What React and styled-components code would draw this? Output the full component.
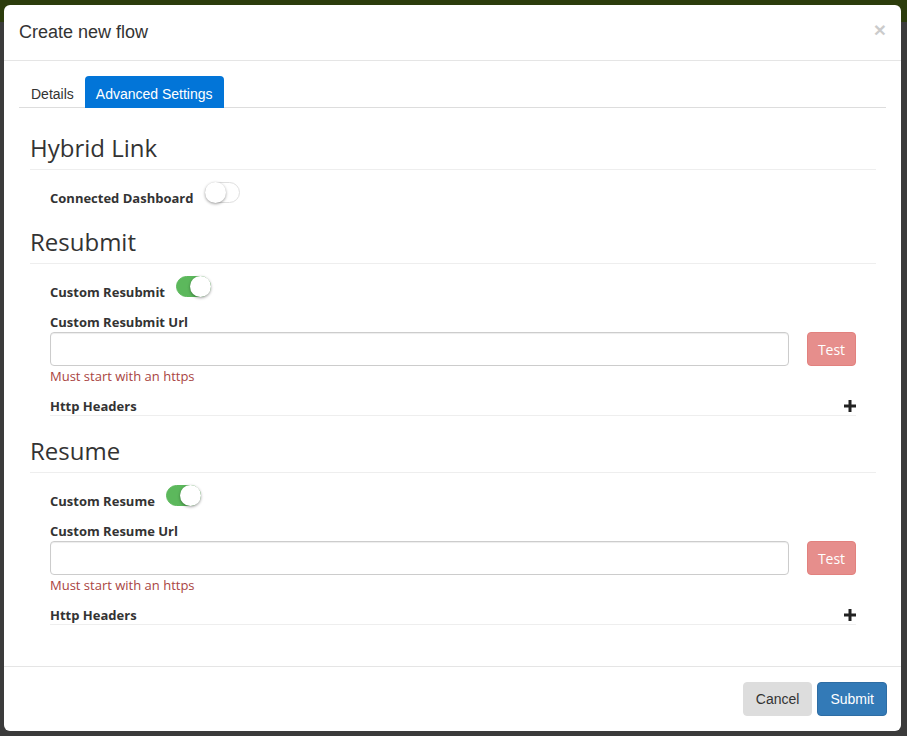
import React, { useState } from "react";
import styled, { createGlobalStyle } from "styled-components";

const Global = createGlobalStyle`
  html, body { margin: 0; padding: 0; }
  body {
    background: linear-gradient(#2c3c0c 0, #2c3c0c 22px, #3b3b3b 22px, #3b3b3b 100%);
    min-height: 736px;
    font-family: "Open Sans", "Noto Sans", sans-serif;
    color: #333;
  }
  * { box-sizing: border-box; }
`;

const Page = styled.div`
  padding: 5px 6px 5px 4px;
`;

const Modal = styled.div`
  width: 897px;
  background: #fff;
  border-radius: 6px;
  display: flex;
  flex-direction: column;
`;

const Header = styled.div`
  display: flex;
  align-items: center;
  justify-content: space-between;
  padding: 15px;
  border-bottom: 1px solid #e5e5e5;
`;

const Title = styled.h4`
  margin: 0;
  font-family: "Liberation Sans", Arial, sans-serif;
  font-size: 18px;
  font-weight: 400;
  line-height: 25px;
  color: #333;
`;

const Close = styled.button`
  border: 0;
  background: none;
  padding: 0;
  margin-top: -6px;
  font-family: "Liberation Sans", Arial, sans-serif;
  font-size: 21px;
  font-weight: 700;
  line-height: 1;
  color: #000;
  opacity: 0.2;
  cursor: pointer;
`;

const Body = styled.div`
  padding: 15px;
`;

const Tabs = styled.div`
  display: flex;
  border-bottom: 1px solid #ddd;
`;

const Tab = styled.button`
  border: 0;
  margin: 0 0 -1px;
  padding: 7px 11px 4px;
  height: 32px;
  font-family: "Liberation Sans", Arial, sans-serif;
  font-size: 14px;
  line-height: 20px;
  border-radius: 4px 4px 0 0;
  cursor: pointer;
  background: ${(p) => (p.$active ? "#0275d8" : "transparent")};
  color: ${(p) => (p.$active ? "#fff" : "#333")};
  &:first-child {
    padding-left: 12px;
  }
`;

const Panel = styled.div`
  padding: 0 10px 26px 11px;
`;

const Section = styled.section`
  margin-top: ${(p) => (p.$first ? "27px" : "22px")};
`;

const Heading = styled.h3`
  margin: 0 0 12px;
  padding: 0 0 8px;
  border-bottom: 1px solid #eee;
  font-size: 24px;
  font-weight: 400;
  line-height: 26px;
  color: #333;
`;

const Group = styled.div`
  padding: 0 20px;
`;

const ToggleRow = styled.div`
  display: flex;
  align-items: flex-start;
  gap: 11px;
`;

const Label = styled.label`
  display: block;
  font-size: 13px;
  font-weight: 700;
  line-height: 18px;
  color: #333;
  padding-top: ${(p) => (p.$inline ? "7px" : "0")};
  margin-top: ${(p) => (p.$spaced ? "12px" : "0")};
`;

const Switch = styled.button`
  position: relative;
  flex: none;
  width: 35px;
  height: 21px;
  margin-left: ${(p) => (p.$on ? "0" : "1px")};
  border-radius: 11px;
  padding: 0;
  cursor: pointer;
  border: 1px solid ${(p) => (p.$on ? "#5cb85c" : "#dfdfdf")};
  background: ${(p) => (p.$on ? "#5cb85c" : "#fff")};
  &::after {
    content: "";
    position: absolute;
    top: -1px;
    left: ${(p) => (p.$on ? "13px" : "-1px")};
    width: 21px;
    height: 21px;
    border-radius: 50%;
    background: #fff;
    box-shadow: 0 1px 3px rgba(0, 0, 0, 0.4);
  }
`;

const UrlRow = styled.div`
  display: flex;
  gap: 18px;
  margin-top: 1px;
`;

const Input = styled.input`
  flex: 1;
  height: 34px;
  border: 1px solid #ccc;
  border-radius: 4px;
  padding: 6px 12px;
  font-size: 14px;
  box-shadow: inset 0 1px 1px rgba(0, 0, 0, 0.075);
  outline: none;
`;

const TestButton = styled.button`
  width: 49px;
  height: 34px;
  border: 1px solid #d43f3a;
  border-radius: 4px;
  background: #d9534f;
  color: #fff;
  opacity: 0.65;
  font-family: "Open Sans", sans-serif;
  font-size: 14px;
  padding: 0;
  cursor: not-allowed;
`;

const Help = styled.div`
  margin-top: 1px;
  font-size: 13px;
  line-height: 18px;
  color: #a94442;
`;

const HeadersRow = styled.div`
  display: flex;
  justify-content: space-between;
  align-items: center;
  margin-top: 12px;
  border-bottom: 1px solid #eee;
`;

const PlusIcon = styled.svg`
  display: block;
  width: 12px;
  height: 12px;
  fill: #222;
`;

const Footer = styled.div`
  display: flex;
  justify-content: flex-end;
  gap: 5px;
  padding: 15px 14px 15px 15px;
  border-top: 1px solid #e5e5e5;
`;

const FooterButton = styled.button`
  height: 34px;
  padding: 6px 12px;
  border-radius: 4px;
  font-family: "Liberation Sans", Arial, sans-serif;
  font-size: 14px;
  line-height: 20px;
  cursor: pointer;
  border: 1px solid ${(p) => (p.$primary ? "#2e6da4" : "#ddd")};
  background: ${(p) => (p.$primary ? "#337ab7" : "#ddd")};
  color: ${(p) => (p.$primary ? "#fff" : "#333")};
`;

function Plus() {
  return (
    <PlusIcon viewBox="0 0 12 12" aria-hidden="true">
      <rect x="4.5" y="0" width="3" height="12" />
      <rect x="0" y="4.5" width="12" height="3" />
    </PlusIcon>
  );
}

function UrlBlock({ toggleLabel, urlLabel, on, onToggle }) {
  return (
    <Group>
      <ToggleRow>
        <Label $inline>{toggleLabel}</Label>
        <Switch $on={on} onClick={onToggle} aria-label={toggleLabel} />
      </ToggleRow>
      <Label $spaced>{urlLabel}</Label>
      <UrlRow>
        <Input type="text" />
        <TestButton disabled>Test</TestButton>
      </UrlRow>
      <Help>Must start with an https</Help>
      <HeadersRow>
        <Label>Http Headers</Label>
        <Plus />
      </HeadersRow>
    </Group>
  );
}

export default function App() {
  const [tab, setTab] = useState("adv");
  const [dash, setDash] = useState(false);
  const [resubmit, setResubmit] = useState(true);
  const [resume, setResume] = useState(true);
  return (
    <Page>
      <Global />
      <Modal>
        <Header>
          <Title>Create new flow</Title>
          <Close aria-label="Close">×</Close>
        </Header>
        <Body>
          <Tabs>
            <Tab $active={tab === "details"} onClick={() => setTab("details")}>Details</Tab>
            <Tab $active={tab === "adv"} onClick={() => setTab("adv")}>Advanced Settings</Tab>
          </Tabs>
          <Panel>
            <Section $first>
              <Heading>Hybrid Link</Heading>
              <Group>
                <ToggleRow>
                  <Label $inline>Connected Dashboard</Label>
                  <Switch $on={dash} onClick={() => setDash(!dash)} aria-label="Connected Dashboard" />
                </ToggleRow>
              </Group>
            </Section>
            <Section>
              <Heading>Resubmit</Heading>
              <UrlBlock
                toggleLabel="Custom Resubmit"
                urlLabel="Custom Resubmit Url"
                on={resubmit}
                onToggle={() => setResubmit(!resubmit)}
              />
            </Section>
            <Section>
              <Heading>Resume</Heading>
              <UrlBlock
                toggleLabel="Custom Resume"
                urlLabel="Custom Resume Url"
                on={resume}
                onToggle={() => setResume(!resume)}
              />
            </Section>
          </Panel>
        </Body>
        <Footer>
          <FooterButton>Cancel</FooterButton>
          <FooterButton $primary>Submit</FooterButton>
        </Footer>
      </Modal>
    </Page>
  );
}
